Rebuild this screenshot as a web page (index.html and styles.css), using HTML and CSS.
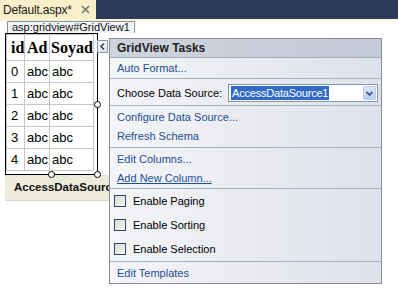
FILE: index.html
```html
<!DOCTYPE html>
<html>
<head>
<meta charset="utf-8">
<title>Default.aspx</title>
<link rel="stylesheet" href="styles.css">
</head>
<body>
<div class="tabbar">
  <div class="tab">
    <span class="tab-title">Default.aspx*</span>
    <svg class="tab-close" width="9" height="9" viewBox="0 0 9 9"><path d="M1 1 L8 8 M8 1 L1 8" stroke="#777" stroke-width="1.6" fill="none"/></svg>
  </div>
</div>
<div class="tabstrip"></div>
<div class="design">
  <div class="ctl-label">asp:gridview#GridView1</div>
  <div class="selection">
    <div class="grid">
      <div class="cell th c-id">id</div><div class="cell th c-ad">Ad</div><div class="cell th c-soy">Soyad</div>
      <div class="cell c-id">0</div><div class="cell c-ad">abc</div><div class="cell c-soy">abc</div>
      <div class="cell c-id">1</div><div class="cell c-ad">abc</div><div class="cell c-soy">abc</div>
      <div class="cell c-id">2</div><div class="cell c-ad">abc</div><div class="cell c-soy">abc</div>
      <div class="cell c-id">3</div><div class="cell c-ad">abc</div><div class="cell c-soy">abc</div>
      <div class="cell c-id">4</div><div class="cell c-ad">abc</div><div class="cell c-soy">abc</div>
    </div>
    <span class="handle h-mr"></span>
    <span class="handle h-bm"></span>
    <span class="handle h-br"></span>
  </div>
  <div class="datasource">AccessDataSource1</div>

  <div class="smart-tag">
    <svg width="9" height="11" viewBox="0 0 9 11"><path d="M6 2.5 L3 5.5 L6 8.5" stroke="#333" stroke-width="1.4" fill="none"/></svg>
  </div>

  <div class="tasks">
    <div class="tasks-head">GridView Tasks</div>
    <div class="sec sec-a"><a class="link">Auto Format...</a></div>
    <div class="sec sec-b">
      <span class="lbl">Choose Data Source:</span>
      <div class="combo">
        <span class="combo-val">AccessDataSource1</span>
        <span class="combo-btn"><svg width="11" height="11" viewBox="0 0 11 11"><path d="M2.5 4 L5.5 7 L8.5 4" stroke="#4a5f8a" stroke-width="1.8" fill="none"/></svg></span>
      </div>
    </div>
    <div class="sec sec-c">
      <a class="link">Configure Data Source...</a>
      <a class="link">Refresh Schema</a>
    </div>
    <div class="sec sec-d">
      <a class="link">Edit Columns...</a>
      <a class="link link-hover">Add New Column...</a>
    </div>
    <div class="sec sec-e">
      <label class="chk"><span class="box"></span>Enable Paging</label>
      <label class="chk"><span class="box"></span>Enable Sorting</label>
      <label class="chk"><span class="box"></span>Enable Selection</label>
    </div>
    <div class="sec sec-f"><a class="link">Edit Templates</a></div>
  </div>
</div>
</body>
</html>
```

FILE: styles.css
```css
html, body {
  margin: 0;
  padding: 0;
}
body {
  width: 398px;
  height: 306px;
  overflow: hidden;
  background: #ffffff;
  font-family: "Liberation Sans", Arial, sans-serif;
  color: #000;
}

/* document tab bar */
.tabbar {
  height: 19px;
  background: #2b3a58;
  display: flex;
}
.tab {
  width: 96px;
  box-sizing: border-box;
  background: #f8eec8;
  display: flex;
  align-items: center;
  padding-left: 3px;
  padding-right: 6px;
  font-size: 12px;
  letter-spacing: -0.2px;
  color: #1b1b1b;
}
.tab-close {
  margin-left: auto;
  display: block;
}
.tabstrip {
  height: 2px;
  margin-right: 5px;
  background: #fbf3d4;
}

/* design surface */
.design {
  position: relative;
  height: 285px;
}
.ctl-label {
  width: fit-content;
  margin-left: 7px;
  height: 11px;
  line-height: 11px;
  padding: 0 4px;
  font-size: 11px;
  color: #111;
  background: #f3f5f9;
  border: 1px solid #8791a6;
  border-bottom: 0;
}
.selection {
  position: relative;
  width: fit-content;
  margin-left: 5px;
  border: 1px solid #000;
  padding: 0 3px 3px 0;
}
.grid {
  display: grid;
  grid-template-columns: 18px 25px 44px;
  grid-auto-rows: 22px;
  border-top: 1px solid #c6c6c6;
  border-left: 1px solid #c6c6c6;
}
.cell {
  box-sizing: border-box;
  border-right: 1px solid #c6c6c6;
  border-bottom: 1px solid #c6c6c6;
  font-size: 13px;
  line-height: 21px;
  white-space: nowrap;
  padding-left: 2px;
}
.cell.c-id { padding-left: 4px; }
.th {
  height: 26px;
  line-height: 25px;
  font-family: "Liberation Serif", "Times New Roman", serif;
  font-weight: bold;
  font-size: 16px;
}
.grid > .th { grid-row: 1; }
.grid { grid-template-rows: 26px; }
.th.c-soy { padding-left: 1px; }

.handle {
  position: absolute;
  width: 7px;
  height: 7px;
  box-sizing: border-box;
  border: 1px solid #000;
  border-radius: 50%;
  background: #fff;
}
.h-mr { left: 88px; top: 67px; }
.h-bm { left: 42px; top: 137px; }
.h-br { left: 88px; top: 137px; }

.datasource {
  margin-left: 5px;
  width: 131px;
  height: 25px;
  line-height: 25px;
  padding-left: 9px;
  background: #ecead9;
  border-bottom: 1px solid #d9d6c6;
  font-size: 11.5px;
  font-weight: bold;
  color: #111;
  white-space: nowrap;
  overflow: hidden;
}

/* smart tag glyph */
.smart-tag {
  position: absolute;
  left: 97px;
  top: 19px;
  width: 11px;
  height: 13px;
  box-sizing: border-box;
  border: 1px solid #8b96aa;
  background: linear-gradient(#f6f7fa, #dfe3eb);
  display: flex;
  align-items: center;
  justify-content: center;
}
.smart-tag svg { display: block; }

/* task panel */
.tasks {
  position: absolute;
  left: 109px;
  top: 17px;
  width: 273px;
  box-sizing: border-box;
  border: 1px solid #868c98;
  background: linear-gradient(to right, #f4f5f8, #dee1e9);
  font-size: 11px;
}
.tasks-head {
  height: 18px;
  line-height: 18px;
  padding-left: 7px;
  font-weight: bold;
  font-size: 12px;
  color: #222;
  background: linear-gradient(to right, #ced3dd, #c4cad6);
  border-bottom: 1px solid #a3a9b6;
}
.sec {
  border-top: 1px solid #aab0bb;
  display: flex;
  flex-direction: column;
}
.sec-a { border-top: 0; height: 20px; justify-content: center; }
.sec-b {
  height: 24px;
  padding-top: 2px;
  flex-direction: row;
  align-items: center;
}
.sec-c { padding: 2px 0 1px; }
.sec-d { padding: 2px 0 0; }
.sec-e { padding: 0; }
.sec-f { height: 21px; justify-content: center; }

.link {
  display: block;
  padding-left: 7px;
  line-height: 19px;
  color: #1d4e96;
  text-decoration: none;
}
.sec-a .link, .sec-f .link { line-height: 20px; }
.link-hover { text-decoration: underline; }

.lbl {
  padding-left: 7px;
  color: #000;
}
.combo {
  margin-left: auto;
  margin-right: 3px;
  width: 150px;
  height: 18px;
  box-sizing: border-box;
  border: 1px solid #7f9db9;
  background: #fff;
  display: flex;
  align-items: center;
}
.combo-val {
  margin-left: 2px;
  padding: 0 1px;
  line-height: 14px;
  background: #316ac5;
  color: #fff;
  letter-spacing: -0.2px;
}
.combo-btn {
  margin-left: auto;
  margin-right: 1px;
  width: 13px;
  height: 14px;
  box-sizing: border-box;
  border: 1px solid #b9cbf1;
  border-radius: 2px;
  background: linear-gradient(#dde7fc, #b9ccf4);
  display: flex;
  align-items: center;
  justify-content: center;
}
.combo-btn svg { display: block; }

.chk {
  height: 24px;
  display: flex;
  align-items: center;
  padding-left: 4px;
  color: #000;
}
.box {
  width: 12px;
  height: 12px;
  box-sizing: border-box;
  border: 1px solid #32496b;
  background: linear-gradient(135deg, #d9d9d2, #f7f7f5);
  margin-right: 7px;
}
```
